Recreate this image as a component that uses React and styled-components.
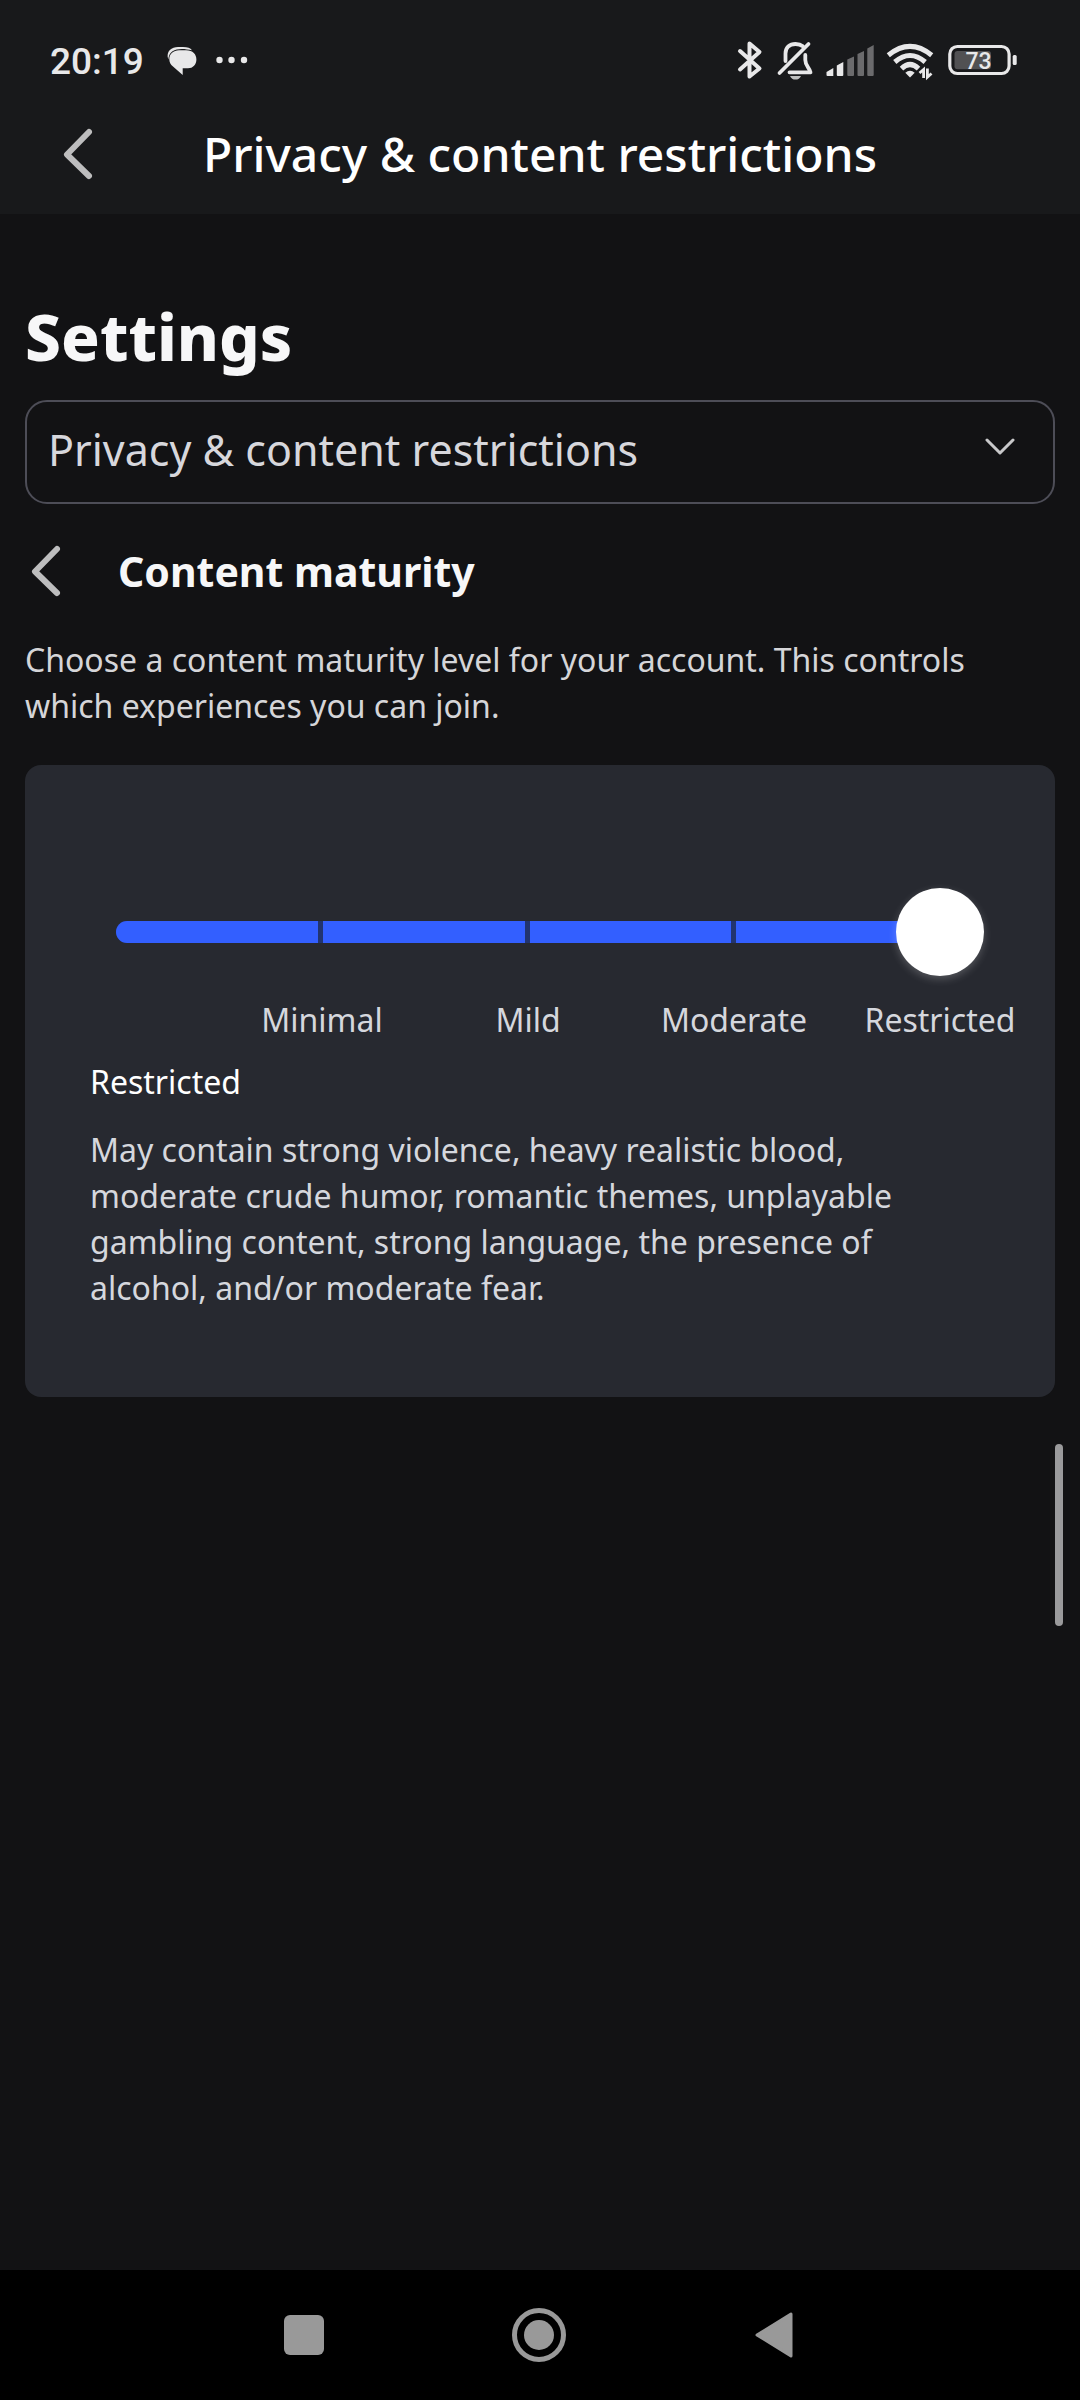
import React, { useState } from 'react';
import styled, { createGlobalStyle } from 'styled-components';

const GlobalStyle = createGlobalStyle`
  *, *::before, *::after { box-sizing: border-box; }
  body {
    margin: 0;
    background: #121214;
    color: #d5d7dd;
    font-family: "Noto Sans", "Open Sans", sans-serif;
    font-size: 32px;
    line-height: 46px;
  }
  h1, h2, p, ul { margin: 0; padding: 0; }
  button { border: 0; padding: 0; background: none; color: inherit; cursor: pointer; }
  svg { display: block; flex: none; }
`;

const Screen = styled.div`
  min-height: 100vh;
  display: flex;
  flex-direction: column;
`;

const TopArea = styled.div`
  background: #18191b;
`;

const StatusBar = styled.div`
  height: 94px;
  padding: 30px 62px 0 50px;
  display: flex;
  align-items: center;
  justify-content: space-between;
  color: #e8e8e9;
`;

const StatusGroup = styled.div`
  display: flex;
  align-items: center;
  gap: ${(p) => p.$gap}px;
`;

const Clock = styled.time`
  font-family: Roboto, sans-serif;
  font-size: 37px;
  font-weight: 500;
  line-height: 44px;
`;

const Header = styled.header`
  height: 120px;
  display: grid;
  grid-template-columns: 156px 1fr 156px;
  align-items: center;
`;

const HeaderTitle = styled.div`
  color: #fff;
  font-size: 48px;
  font-weight: 500;
  line-height: 64px;
  text-align: center;
  white-space: nowrap;
`;

const BackButton = styled.button`
  height: 60px;
  display: flex;
  align-items: center;
  justify-content: ${(p) => (p.$inline ? 'flex-start' : 'center')};
`;

const Main = styled.main`
  position: relative;
  flex: 1;
  padding: 80px 25px 0;
`;

const PageTitle = styled.h1`
  color: #f7f7f8;
  font-size: 64px;
  font-weight: 800;
  line-height: 86px;
`;

const SelectBox = styled.div`
  display: grid;
  align-items: center;
  margin: 20px 0 36px;

  > * { grid-area: 1 / 1; }
  > svg { justify-self: end; margin: 0 40px 10px 0; pointer-events: none; }
`;

const Select = styled.select`
  appearance: none;
  width: 100%;
  height: 104px;
  padding: 0 88px 5px 21px;
  border: 2px solid #4d4d57;
  border-radius: 22px;
  background: transparent;
  color: #d7d7dc;
  font-family: inherit;
  font-size: 43px;
`;

const SectionHeader = styled.div`
  display: flex;
  align-items: center;
  gap: 57px;
  height: 61px;
  padding-left: 6px;
  margin-bottom: 36px;
`;

const SectionTitle = styled.h2`
  color: #f7f7f8;
  font-size: 41px;
  font-weight: 700;
  line-height: 60px;
`;

const Intro = styled.p`
  max-width: 1000px;
  color: #d5d5d8;
  margin-bottom: 36px;
`;

const Card = styled.section`
  padding: 123px 0 86px;
  border-radius: 16px;
  background: #272930;
`;

const Slider = styled.div`
  display: grid;
  align-items: center;
  margin: 0 71px 21px 47px;

  > * { grid-area: 1 / 1; }
`;

const Track = styled.div`
  display: flex;
  gap: 5px;
  height: 22px;
  margin: 0 46px 0 44px;
  border-radius: 11px;
  overflow: hidden;
  background: #22346f;
`;

const Segment = styled.span`
  flex: 1;
  background: ${(p) => (p.$on ? '#335fff' : '#4a4c55')};
`;

const Range = styled.input`
  appearance: none;
  width: 100%;
  height: 88px;
  margin: 0;
  background: transparent;

  &::-webkit-slider-runnable-track { height: 88px; background: transparent; }
  &::-webkit-slider-thumb {
    appearance: none;
    width: 88px;
    height: 88px;
    border-radius: 50%;
    background: #fff;
    box-shadow: 0 3px 8px rgba(255, 255, 255, 0.22);
  }
`;

const Levels = styled.ul`
  display: grid;
  grid-template-columns: repeat(4, 1fr);
  margin: 0 12px 16px 194px;
  list-style: none;
  text-align: center;
`;

const LevelInfo = styled.div`
  display: grid;
  gap: 22px;
  padding: 0 120px 0 65px;
`;

const LevelName = styled.h2`
  color: #fff;
  font-size: 32px;
  font-weight: 400;
`;

const ScrollThumb = styled.div`
  position: absolute;
  top: 1230px;
  right: 17px;
  width: 8px;
  height: 182px;
  border-radius: 4px;
  background: #9a9a9c;
`;

const NavBar = styled.nav`
  height: 130px;
  padding-right: 3px;
  display: flex;
  align-items: center;
  justify-content: center;
  gap: 139px;
  background: #000;
  color: #999;
`;

const NavButton = styled.button`
  width: 96px;
  height: 96px;
  display: flex;
  align-items: center;
  justify-content: center;
`;

const ChevronLeft = () => (
  <svg width="30" height="52" viewBox="0 0 30 52" fill="none" stroke="#bdbdbe" strokeWidth="6" strokeLinecap="round" strokeLinejoin="round">
    <path d="M26 4 4 26.5 26 48" />
  </svg>
);

const ChevronDown = () => (
  <svg width="30" height="20" viewBox="0 0 30 20" fill="none" stroke="#c8c8ca" strokeWidth="3" strokeLinecap="round" strokeLinejoin="round">
    <path d="M2 3 15 16 28 3" />
  </svg>
);

const ChatIcon = () => (
  <svg width="34" height="44" viewBox="0 0 34 44" fill="currentColor">
    <path d="M5.300 19.500C2.500 11 9 7 15 7H20C24.500 7 27.500 8 29 10.300 18 7.500 6 8 5.300 19.500Z" />
    <path d="M16 10.300H23C30 10.300 33.400 14.500 33.400 19.500S30 28.300 25 28.300H19.700V35L10 26.500C7.500 24.500 6.300 22 6.300 19 6.300 14 10.500 10.300 16 10.300Z" />
  </svg>
);

const DotsIcon = () => (
  <svg width="36" height="44" viewBox="0 0 36 44" fill="currentColor">
    <circle cx="3.500" cy="20" r="3.200" />
    <circle cx="15.500" cy="20" r="3.200" />
    <circle cx="28" cy="20" r="3.200" />
  </svg>
);

const BluetoothIcon = () => (
  <svg width="32" height="44" viewBox="0 0 32 44" fill="none" stroke="currentColor" strokeWidth="4" strokeLinecap="round" strokeLinejoin="round">
    <path d="M4 11 23.500 28.500 13.500 36.500V3.500L23.500 12 4 29.500" />
  </svg>
);

const BellOffIcon = () => (
  <svg width="40" height="44" viewBox="0 0 40 44" fill="none" stroke="currentColor" strokeWidth="3.800" strokeLinecap="round" strokeLinejoin="round">
    <path d="M9.500 21V13.500C9.500 7.500 13.500 4 19.500 4 22.500 4 25 4.800 26.800 6.300" />
    <path d="M29.300 15V20C29.300 26 33.500 27.500 34.500 32.300H13.500" />
    <path d="M3.500 33 32.500 4" />
    <path d="M14 36H25C24 38.500 22 39.600 19.500 39.600S15 38.500 14 36Z" fill="currentColor" stroke="none" opacity="0.8" />
  </svg>
);

const SignalIcon = () => (
  <svg width="52" height="44" viewBox="0 0 52 44" fill="currentColor">
    <path d="M2.500 32 9.300 28V36H3.500Q2.500 36 2.500 35Z" />
    <path d="M12.800 25.500 19.300 22V35Q19.300 36 18.300 36H13.800Q12.800 36 12.800 35Z" />
    <g fill="#6b6b6d">
      <path d="M23.300 19.500 30 16.500V35Q30 36 29 36H24.300Q23.300 36 23.300 35Z" />
      <path d="M33.500 14 40 11V35Q40 36 39 36H34.500Q33.500 36 33.500 35Z" />
      <path d="M43.300 8.500 49.700 5V35Q49.700 36 48.700 36H44.300Q43.300 36 43.300 35Z" />
    </g>
  </svg>
);

const WifiIcon = () => (
  <svg width="54" height="44" viewBox="0 0 54 44" fill="none" stroke="currentColor" strokeWidth="5">
    <path d="M4.300 15.200Q26 -2.500 47.700 15.200" />
    <path d="M10.800 22Q26 9 41.200 22" />
    <path d="M17.500 28.600Q26 20.400 34.500 28.600" />
    <path d="M21.300 32.800Q26 28.500 30.700 32.800L26 37.500Z" fill="currentColor" stroke="none" />
    <path d="M35.500 33 39.600 29.500V38M43.400 28.500V37.200L47.500 33.500" strokeWidth="2.800" />
  </svg>
);

const BatteryIcon = () => (
  <svg width="72" height="44" viewBox="0 0 72 44">
    <rect x="8.500" y="11" width="36.500" height="18.300" rx="3" fill="#515153" />
    <rect x="3.800" y="6.500" width="59.300" height="27" rx="7.500" fill="none" stroke="currentColor" strokeWidth="3.200" />
    <rect x="66.700" y="15" width="4" height="10" rx="1.500" fill="currentColor" />
    <text x="32.500" y="29" textAnchor="middle" fill="currentColor" fontFamily="Roboto, sans-serif" fontSize="23" fontWeight="500">73</text>
  </svg>
);

const LEVELS = ['Minimal', 'Mild', 'Moderate', 'Restricted'];

export default function App() {
  const [level, setLevel] = useState(4);

  return (
    <Screen>
      <GlobalStyle />
      <TopArea>
        <StatusBar>
          <StatusGroup $gap={19}>
            <Clock>20:19</Clock>
            <ChatIcon />
            <DotsIcon />
          </StatusGroup>
          <StatusGroup $gap={8}>
            <BluetoothIcon />
            <BellOffIcon />
            <SignalIcon />
            <WifiIcon />
            <BatteryIcon />
          </StatusGroup>
        </StatusBar>
        <Header>
          <BackButton aria-label="Back"><ChevronLeft /></BackButton>
          <HeaderTitle>Privacy &amp; content restrictions</HeaderTitle>
        </Header>
      </TopArea>

      <Main>
        <PageTitle>Settings</PageTitle>
        <SelectBox>
          <Select aria-label="Settings section" defaultValue="privacy">
            <option value="privacy">Privacy &amp; content restrictions</option>
          </Select>
          <ChevronDown />
        </SelectBox>

        <SectionHeader>
          <BackButton $inline aria-label="Back to privacy settings"><ChevronLeft /></BackButton>
          <SectionTitle id="maturity">Content maturity</SectionTitle>
        </SectionHeader>
        <Intro>
          Choose a content maturity level for your account. This controls which experiences you can join.
        </Intro>

        <Card>
          <Slider>
            <Track>
              {LEVELS.map((name, i) => <Segment key={name} $on={i < level} />)}
            </Track>
            <Range
              type="range"
              min="0"
              max="4"
              step="1"
              value={level}
              aria-labelledby="maturity"
              onChange={(e) => setLevel(Math.max(1, Number(e.target.value)))}
            />
          </Slider>
          <Levels>
            {LEVELS.map((name) => <li key={name}>{name}</li>)}
          </Levels>
          <LevelInfo>
            <LevelName>{LEVELS[level - 1]}</LevelName>
            <p>
              May contain strong violence, heavy realistic blood, moderate crude humor, romantic themes, unplayable
              gambling content, strong language, the presence of alcohol, and/or moderate fear.
            </p>
          </LevelInfo>
        </Card>
        <ScrollThumb />
      </Main>

      <NavBar>
        <NavButton aria-label="Recent apps">
          <svg width="40" height="40" viewBox="0 0 40 40"><rect width="40" height="40" rx="6" fill="currentColor" /></svg>
        </NavButton>
        <NavButton aria-label="Home">
          <svg width="54" height="54" viewBox="0 0 54 54">
            <circle cx="27" cy="27" r="24.500" fill="none" stroke="currentColor" strokeWidth="5" />
            <circle cx="27" cy="27" r="15" fill="currentColor" />
          </svg>
        </NavButton>
        <NavButton aria-label="Back">
          <svg width="38" height="46" viewBox="0 0 38 46" fill="currentColor" stroke="currentColor" strokeWidth="3" strokeLinejoin="round">
            <path d="M2 23 36 2V44Z" />
          </svg>
        </NavButton>
      </NavBar>
    </Screen>
  );
}
